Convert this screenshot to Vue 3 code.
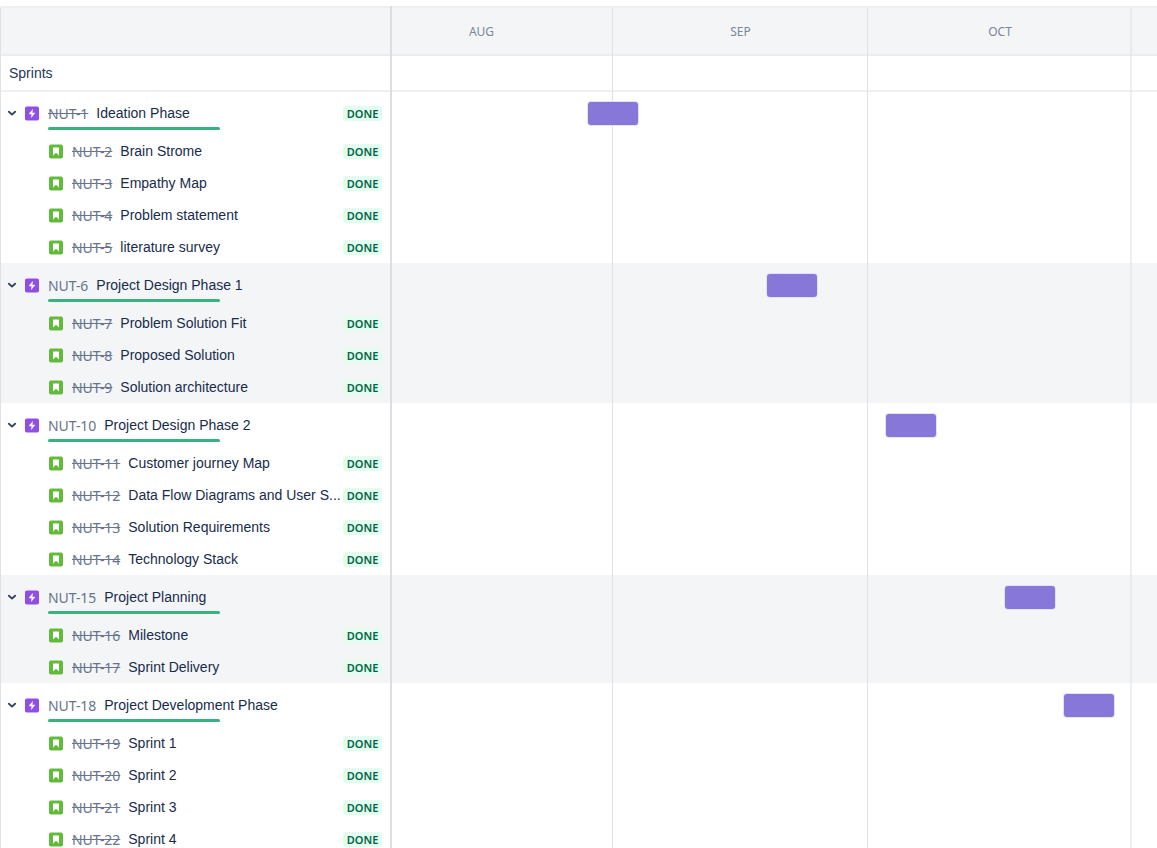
<script setup>
const months = [
  { label: 'AUG', width: 263 },
  { label: 'SEP', width: 255 },
  { label: 'OCT', width: 264, soft: true },
  { label: '', width: 60 }
]

const groups = [
  {
    key: 'NUT-1', title: 'Ideation Phase', closed: true, start: 196,
    items: [
      ['NUT-2', 'Brain Strome'],
      ['NUT-3', 'Empathy Map'],
      ['NUT-4', 'Problem statement'],
      ['NUT-5', 'literature survey']
    ]
  },
  {
    key: 'NUT-6', title: 'Project Design Phase 1', closed: false, start: 374.5,
    items: [
      ['NUT-7', 'Problem Solution Fit'],
      ['NUT-8', 'Proposed Solution'],
      ['NUT-9', 'Solution architecture']
    ]
  },
  {
    key: 'NUT-10', title: 'Project Design Phase 2', closed: false, start: 493.5,
    items: [
      ['NUT-11', 'Customer journey Map'],
      ['NUT-12', 'Data Flow Diagrams and User S...'],
      ['NUT-13', 'Solution Requirements'],
      ['NUT-14', 'Technology Stack']
    ]
  },
  {
    key: 'NUT-15', title: 'Project Planning', closed: false, start: 612.5,
    items: [
      ['NUT-16', 'Milestone'],
      ['NUT-17', 'Sprint Delivery']
    ]
  },
  {
    key: 'NUT-18', title: 'Project Development Phase', closed: false, start: 672,
    items: [
      ['NUT-19', 'Sprint 1'],
      ['NUT-20', 'Sprint 2'],
      ['NUT-21', 'Sprint 3'],
      ['NUT-22', 'Sprint 4']
    ]
  }
]
</script>

<template>
  <main class="roadmap">
    <section class="list">
      <div class="head"></div>
      <div class="sprints">Sprints</div>
      <div class="groups">
        <div v-for="(g, i) in groups" :key="g.key" :class="{ shaded: i % 2 }">
          <div class="epic">
            <svg class="chevron" width="10" height="8" viewBox="0 0 10 8">
              <path d="M1.9 2.7 5 5.6 8.1 2.7" fill="none" stroke="#344563" stroke-width="1.9" stroke-linecap="round" stroke-linejoin="round" />
            </svg>
            <svg class="icon" width="14" height="16" viewBox="0 -1.5 14 16">
              <rect width="14" height="14" rx="1.8" fill="#904ee2" />
              <path d="M7.6 2.9 4 7.5h2.7L6.3 11 10 6.5H7.3z" fill="#fff" stroke="#fff" stroke-width=".4" stroke-linejoin="round" />
            </svg>
            <span class="key" :class="{ closed: g.closed }">{{ g.key }}</span>
            <span class="title">{{ g.title }}</span>
            <span v-if="g.closed" class="badge">DONE</span>
            <span class="progress"></span>
          </div>
          <div v-for="item in g.items" :key="item[0]" class="story">
            <svg class="icon" width="14" height="16" viewBox="0 -1.5 14 16">
              <rect width="14" height="14" rx="1.8" fill="#63ba3c" />
              <path d="M4 3.5Q4 3 4.5 3h5Q10 3 10 3.5V11L7 8.3 4 11z" fill="#fff" />
            </svg>
            <span class="key closed">{{ item[0] }}</span>
            <span class="title">{{ item[1] }}</span>
            <span class="badge">DONE</span>
          </div>
        </div>
      </div>
    </section>

    <section class="timeline">
      <div class="head months">
        <div v-for="m in months" :key="m.label" class="month" :style="{ width: m.width + 'px' }">{{ m.label }}</div>
      </div>
      <div class="sprints"></div>
      <div class="groups">
        <div v-for="(g, i) in groups" :key="g.key" :class="{ shaded: i % 2 }">
          <div class="lane">
            <span class="bar" :style="{ marginLeft: g.start + 'px' }"></span>
          </div>
          <div v-for="item in g.items" :key="item[0]" class="sublane"></div>
        </div>
      </div>
      <div class="grid-lines">
        <i v-for="m in months" :key="m.label" :class="{ soft: m.soft }" :style="{ width: m.width + 'px' }"></i>
      </div>
    </section>
  </main>
</template>

<style>
html,
body {
  background: #fff;
  overflow: hidden;
}
</style>

<style scoped>
.roadmap {
  box-sizing: border-box;
  display: flex;
  height: 848px;
  padding-top: 6px;
  overflow: hidden;
  font-family: "Liberation Sans", Arial, sans-serif;
  font-size: 14px;
  color: #172b4d;
}
.list {
  box-sizing: border-box;
  flex: none;
  width: 392px;
  border-left: 1px solid #dfe1e6;
  border-right: 2px solid #dddee5;
  border-top-left-radius: 3px;
}
.timeline {
  position: relative;
  flex: 1;
  min-width: 0;
  overflow: hidden;
}
.head {
  box-sizing: border-box;
  height: 50px;
  background: #f4f5f7;
  border-top: 2px solid #eeeff2;
  border-bottom: 2px solid #ebecf0;
}
.list .head {
  border-top-left-radius: 3px;
}
.sprints {
  box-sizing: border-box;
  height: 36px;
  padding-left: 8px;
  line-height: 34px;
  color: #253858;
  border-bottom: 2px solid #eeeff1;
}
.groups {
  margin-top: -1px;
}
.shaded {
  background: #f4f5f7;
}
.months {
  display: flex;
}
.month {
  flex: none;
  font: 12px/48px "Noto Sans", sans-serif;
  color: #7a869a;
  text-align: center;
}
.month:first-child {
  margin-left: -42px;
}
.grid-lines {
  position: absolute;
  inset: 2px 0 0 0;
  display: flex;
}
.grid-lines i {
  box-sizing: border-box;
  flex: none;
  border-right: 1px solid #dfe1e6;
}
.grid-lines i.soft {
  border-right: 2px solid rgba(223, 225, 230, 0.55);
}
.grid-lines i:first-child {
  margin-left: -42px;
}
.epic,
.story {
  position: relative;
  box-sizing: border-box;
  display: flex;
  align-items: center;
  padding-right: 8px;
}
.epic {
  height: 44px;
  padding-left: 6px;
}
.story {
  height: 32px;
  padding-left: 48px;
}
.chevron {
  flex: none;
  margin-right: 8px;
}
.icon {
  flex: none;
  margin-right: 9px;
}
.key {
  flex: none;
  margin-right: 8px;
  padding-top: 2px;
  font: 14px/20px "Noto Sans", sans-serif;
  letter-spacing: -0.06px;
  color: #66748d;
}
.closed {
  text-decoration: line-through;
}
.title {
  flex: 1;
  min-width: 0;
  line-height: 20px;
  white-space: nowrap;
}
.badge {
  flex: none;
  box-sizing: border-box;
  width: 39px;
  height: 15px;
  border-radius: 3px;
  background: #e3fcef;
  color: #006644;
  font: 600 11px/15px "Noto Sans", sans-serif;
  text-align: center;
}
.progress {
  position: absolute;
  left: 47px;
  top: 36px;
  width: 172px;
  height: 3px;
  border-radius: 2px;
  background: #36b37e;
}
.lane {
  height: 44px;
  display: flex;
  align-items: center;
}
.bar {
  position: relative;
  z-index: 1;
  width: 50px;
  height: 23px;
  border-radius: 3px;
  background: #8777d9;
  box-shadow: 0 0 0 1px #e4e1f5;
}
.sublane {
  height: 32px;
}
</style>
